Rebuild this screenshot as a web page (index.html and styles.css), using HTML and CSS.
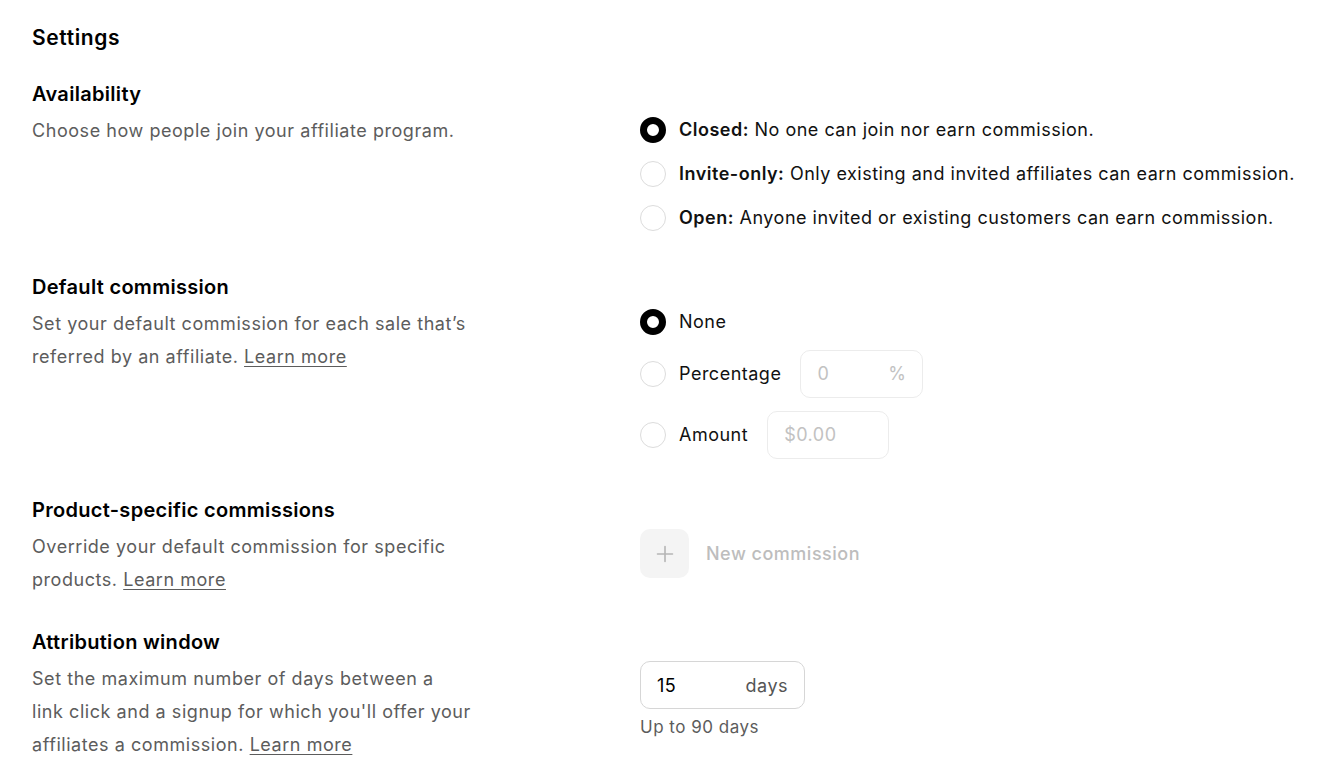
FILE: index.html
```html
<!DOCTYPE html>
<html lang="en">
<head>
<meta charset="utf-8">
<title>Settings</title>
<link rel="stylesheet" href="styles.css">
</head>
<body>
<main class="page">
  <h1 class="page-title">Settings</h1>

  <section class="setting">
    <h2 class="setting-title">Availability</h2>
    <p class="setting-desc">Choose how people join your affiliate program.</p>
    <div class="controls radio-group">
      <label class="radio-row"><span class="radio checked"></span><span class="radio-label"><b>Closed:</b> No one can join nor earn commission.</span></label>
      <label class="radio-row"><span class="radio"></span><span class="radio-label"><b>Invite-only:</b> Only existing and invited affiliates can earn commission.</span></label>
      <label class="radio-row"><span class="radio"></span><span class="radio-label"><b>Open:</b> Anyone invited or existing customers can earn commission.</span></label>
    </div>
  </section>

  <section class="setting">
    <h2 class="setting-title">Default commission</h2>
    <p class="setting-desc">Set your default commission for each sale that’s referred by an affiliate. <a class="link" href="#">Learn more</a></p>
    <div class="controls radio-group commission-group">
      <label class="radio-row"><span class="radio checked"></span><span class="radio-label">None</span></label>
      <label class="radio-row"><span class="radio"></span><span class="radio-label">Percentage</span>
        <span class="field field-percent"><span class="placeholder">0</span><span class="suffix-muted">%</span></span>
      </label>
      <label class="radio-row"><span class="radio"></span><span class="radio-label">Amount</span>
        <span class="field field-amount"><span class="placeholder">$0.00</span></span>
      </label>
    </div>
  </section>

  <section class="setting">
    <h2 class="setting-title">Product-specific commissions</h2>
    <p class="setting-desc">Override your default commission for specific products. <a class="link" href="#">Learn more</a></p>
    <div class="controls">
      <div class="new-commission">
        <span class="plus-box">
          <svg width="18" height="18" viewBox="0 0 18 18" fill="none" stroke="#b5b5b5" stroke-width="1.6" stroke-linecap="round"><path d="M9 1.5v15M1.5 9h15"/></svg>
        </span>
        <span class="new-label">New commission</span>
      </div>
    </div>
  </section>

  <section class="setting">
    <h2 class="setting-title">Attribution window</h2>
    <p class="setting-desc">Set the maximum number of days between a<br>link click and a signup for which you'll offer your affiliates a commission. <a class="link" href="#">Learn more</a></p>
    <div class="controls">
      <div class="field field-days"><span class="value">15</span><span class="suffix">days</span></div>
      <div class="hint">Up to 90 days</div>
    </div>
  </section>
</main>
</body>
</html>
```

FILE: styles.css
```css
* { box-sizing: border-box; }

html, body {
  margin: 0;
  padding: 0;
  background: #fff;
}

body {
  font-family: Inter, "Noto Sans", "Liberation Sans", sans-serif;
  color: #111;
  letter-spacing: 0.5px;
}

.page {
  padding: 24px 32px 0 32px;
}

.page-title {
  margin: 0 0 28px 0;
  font-size: 21px;
  line-height: 28px;
  font-weight: 600;
  letter-spacing: 0.6px;
  color: #000;
}

.setting {
  display: grid;
  grid-template-columns: 608px 1fr;
  grid-template-rows: auto auto;
  margin-bottom: 32px;
}

.setting-title {
  grid-column: 1;
  grid-row: 1;
  margin: 0 0 6px 0;
  font-size: 20px;
  line-height: 28px;
  font-weight: 600;
  letter-spacing: 0.3px;
  color: #000;
}

.setting-desc {
  grid-column: 1;
  grid-row: 2;
  margin: 0;
  max-width: 442px;
  font-size: 18px;
  line-height: 33px;
  letter-spacing: 0.55px;
  color: #5c5c5c;
}

.link {
  color: #5c5c5c;
  text-decoration: underline;
  text-underline-offset: 3px;
  text-decoration-thickness: 1px;
}

.controls {
  grid-column: 2;
  grid-row: 2;
  display: flex;
  flex-direction: column;
  align-items: flex-start;
}

.radio-group {
  gap: 14px;
  padding-top: 1px;
  padding-bottom: 8px;
}

.commission-group {
  gap: 13px;
  padding-top: 0;
  padding-bottom: 5px;
}

.radio-row {
  display: flex;
  align-items: center;
  min-height: 30px;
  font-size: 18px;
  line-height: 30px;
  color: #111;
}

.radio {
  flex: none;
  width: 26px;
  height: 26px;
  border-radius: 50%;
  border: 1px solid #dcdcdc;
  background: #fff;
  margin-right: 13px;
}

.radio.checked {
  border: 7px solid #000;
}

.radio-label b {
  font-weight: 600;
}

.field {
  display: flex;
  align-items: center;
  justify-content: space-between;
  height: 48px;
  padding: 0 16px;
  border: 1px solid #ececec;
  border-radius: 10px;
  font-size: 18px;
  background: #fff;
}

.field-percent {
  width: 123px;
  margin-left: 19px;
}

.field-amount {
  width: 122px;
  margin-left: 19px;
}

.placeholder,
.suffix-muted {
  color: #c2c2c2;
}

.new-commission {
  display: flex;
  align-items: center;
  gap: 17px;
  margin-top: -1px;
}

.plus-box {
  width: 49px;
  height: 49px;
  border-radius: 10px;
  background: #f4f4f4;
  display: flex;
  align-items: center;
  justify-content: center;
}

.new-label {
  font-size: 18px;
  color: #bdbdbd;
  font-weight: 500;
}

.field-days {
  width: 165px;
  border-color: #d6d6d6;
  margin-top: -1px;
}

.field-days .value {
  color: #000;
}

.field-days .suffix {
  color: #555;
}

.hint {
  margin-top: 6px;
  font-size: 17px;
  line-height: 24px;
  color: #5c5c5c;
}
```
